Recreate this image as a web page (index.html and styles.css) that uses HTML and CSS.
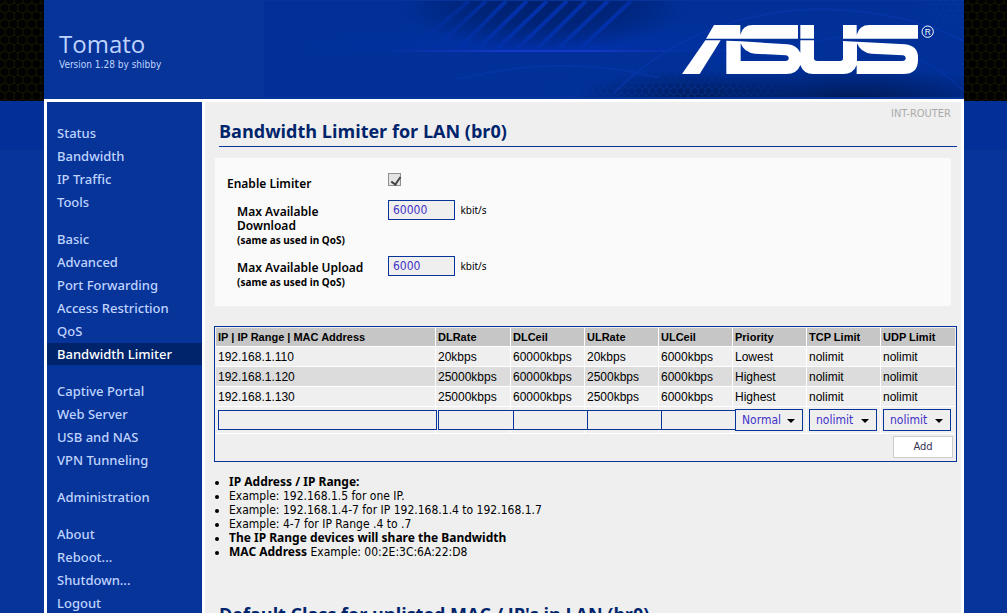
FILE: index.html
```html
<!DOCTYPE html>
<html lang="en">
<head>
  <meta charset="utf-8">
  <title>[INT-ROUTER] Bandwidth Limiter</title>
  <link rel="stylesheet" href="styles.css">
</head>
<body>
  <svg class="top-strip" aria-hidden="true">
    <defs>
      <pattern id="mesh" width="9" height="16" patternUnits="userSpaceOnUse">
        <path d="M5 0v3l4 2v6l-4 2v3M5 3L0 5v6l5 2" fill="none" stroke="#161604"/>
      </pattern>
    </defs>
    <rect width="100%" height="100%" fill="#020202"/>
    <rect width="100%" height="100%" fill="url(#mesh)"/>
  </svg>

  <div class="container">
    <header class="header">
      <svg class="banner" viewBox="0 0 700 96" aria-hidden="true">
        <defs>
          <pattern id="hex" width="7" height="12" patternUnits="userSpaceOnUse">
            <path d="M4 0v2l3 2v4l-3 2v2M4 2L0 4v4l4 2" fill="none" stroke="#063ba4" stroke-width=".7"/>
          </pattern>
          <radialGradient id="shade">
            <stop offset="0" stop-color="#001f6c"/>
            <stop offset=".5" stop-color="#001f6c" stop-opacity=".7"/>
            <stop offset="1" stop-color="#001f6c" stop-opacity="0"/>
          </radialGradient>
          <radialGradient id="dark">
            <stop offset="0" stop-color="#001a58"/>
            <stop offset="1" stop-color="#001a58" stop-opacity="0"/>
          </radialGradient>
          <radialGradient id="fade">
            <stop offset="0" stop-color="#fff"/>
            <stop offset="1" stop-color="#fff" stop-opacity="0"/>
          </radialGradient>
          <radialGradient id="light">
            <stop offset="0" stop-color="#0230a8"/>
            <stop offset="1" stop-color="#0230a8" stop-opacity="0"/>
          </radialGradient>
          <linearGradient id="line">
            <stop offset="0" stop-color="#1638c8" stop-opacity="0"/>
            <stop offset=".4" stop-color="#1638c8"/>
            <stop offset=".65" stop-color="#1638c8"/>
            <stop offset="1" stop-color="#1638c8" stop-opacity="0"/>
          </linearGradient>
          <linearGradient id="stripe" x1="0" y1="0" x2="700" y2="0" gradientUnits="userSpaceOnUse">
            <stop offset=".18" stop-color="#0230a8" stop-opacity="0"/>
            <stop offset=".35" stop-color="#0230a8"/>
            <stop offset=".5" stop-color="#0230a8"/>
            <stop offset=".62" stop-color="#0230a8" stop-opacity="0"/>
          </linearGradient>
          <mask id="hexmask">
            <ellipse cx="410" cy="100" rx="160" ry="40" fill="url(#fade)"/>
            <ellipse cx="690" cy="6" rx="50" ry="30" fill="url(#fade)"/>
          </mask>
        </defs>
        <rect width="700" height="96" fill="#003098"/>
        <ellipse cx="300" cy="48" rx="260" ry="24" fill="url(#light)"/>
        <ellipse cx="280" cy="0" rx="145" ry="50" fill="url(#shade)"/>
        <rect y="49" width="450" height="47" fill="#003098"/>
        <g stroke="url(#stripe)" stroke-width="4">
          <path d="M148 48L205 0M170 48L222 0M194 48L242 0M214 48L263 0M233 48L283 0M253 48L303 0M273 48L322 0M294 48L344 0M316 48L367 0"/>
        </g>
        <rect x="110" y="49" width="330" height="2" fill="url(#line)"/>
        <ellipse cx="430" cy="98" rx="120" ry="30" fill="url(#dark)"/>
        <ellipse cx="590" cy="98" rx="170" ry="32" fill="url(#dark)"/>
        <rect width="700" height="96" fill="url(#hex)" mask="url(#hexmask)"/>
        <g fill="none" stroke="#0a37ae" stroke-width="2">
          <path d="M194 78Q300 52 396 77" opacity=".5"/>
          <path d="M350 92Q430 10 560 8Q640 10 700 40" opacity=".6"/>
          <path d="M450 50Q520 50 600 30M630 50Q670 60 700 90" opacity=".4"/>
        </g>
      </svg>
      <svg class="logo" viewBox="66 75 762 147" role="img" aria-label="ASUS">
        <g fill="#fff">
          <path d="M162 75H241V104Q248 75 278 75H414V116H138Z"/>
          <path d="M421 75H462V116H421Z"/>
          <path d="M549 75H590V104Q598 75 628 75H774V116H549Z"/>
          <path d="M136 121H182L119 222H66Z"/>
          <path fill-rule="evenodd" d="M199 122L243 124L383 133Q410 135 421 158V121H462V175Q462 183 472 183H540Q549 183 549 175V123L590 125L735 133Q774 138 774 172V180Q774 222 730 222H590V195Q580 222 550 222H460Q430 222 421 195Q412 222 378 222H199ZM242 130V183H376Q386 183 386 175Q386 167 377 166L285 161Q252 158 242 130ZM591 130V183H727Q737 183 737 175Q737 167 728 166L634 161Q602 158 591 130Z"/>
        </g>
        <circle cx="803" cy="95" r="17" fill="none" stroke="#fff" stroke-width="3"/>
        <text class="reg" x="803" y="104" text-anchor="middle">R</text>
      </svg>
      <div class="title">Tomato</div>
      <div class="version">Version 1.28 by shibby</div>
    </header>

    <div class="main">
      <nav class="navi">
        <ul>
          <li><a href="#">Status</a></li>
          <li><a href="#">Bandwidth</a></li>
          <li><a href="#">IP Traffic</a></li>
          <li><a href="#">Tools</a></li>
        </ul>
        <ul>
          <li><a href="#">Basic</a></li>
          <li><a href="#">Advanced</a></li>
          <li><a href="#">Port Forwarding</a></li>
          <li><a href="#">Access Restriction</a></li>
          <li><a href="#">QoS</a></li>
          <li><a href="#" class="active">Bandwidth Limiter</a></li>
        </ul>
        <ul>
          <li><a href="#">Captive Portal</a></li>
          <li><a href="#">Web Server</a></li>
          <li><a href="#">USB and NAS</a></li>
          <li><a href="#">VPN Tunneling</a></li>
        </ul>
        <ul>
          <li><a href="#">Administration</a></li>
        </ul>
        <ul>
          <li><a href="#">About</a></li>
          <li><a href="#">Reboot...</a></li>
          <li><a href="#">Shutdown...</a></li>
          <li><a href="#">Logout</a></li>
        </ul>
      </nav>

      <div class="content">
        <div class="ident">INT-ROUTER</div>
        <h2>Bandwidth Limiter for LAN (br0)</h2>

        <div class="section">
          <div class="field">
            <label for="enable">Enable Limiter</label>
            <input type="checkbox" id="enable" checked>
          </div>
          <div class="field indent">
            <label for="dl">Max Available Download <small>(same as used in QoS)</small></label>
            <div><input type="text" id="dl" value="60000"> <span class="unit">kbit/s</span></div>
          </div>
          <div class="field indent">
            <label for="ul">Max Available Upload <small>(same as used in QoS)</small></label>
            <div><input type="text" id="ul" value="6000"> <span class="unit">kbit/s</span></div>
          </div>
        </div>

        <table class="grid">
          <thead>
            <tr><th class="ip">IP | IP Range | MAC Address</th><th class="dlrate">DLRate</th><th>DLCeil</th><th>ULRate</th><th>ULCeil</th><th>Priority</th><th>TCP Limit</th><th>UDP Limit</th></tr>
          </thead>
          <tbody>
            <tr><td>192.168.1.110</td><td>20kbps</td><td>60000kbps</td><td>20kbps</td><td>6000kbps</td><td>Lowest</td><td>nolimit</td><td>nolimit</td></tr>
            <tr class="even"><td>192.168.1.120</td><td>25000kbps</td><td>60000kbps</td><td>2500kbps</td><td>6000kbps</td><td>Highest</td><td>nolimit</td><td>nolimit</td></tr>
            <tr><td>192.168.1.130</td><td>25000kbps</td><td>60000kbps</td><td>2500kbps</td><td>6000kbps</td><td>Highest</td><td>nolimit</td><td>nolimit</td></tr>
            <tr class="editor">
              <td><input type="text" aria-label="IP, IP range or MAC address"></td>
              <td><input type="text" aria-label="DLRate"></td>
              <td><input type="text" aria-label="DLCeil"></td>
              <td><input type="text" aria-label="ULRate"></td>
              <td><input type="text" aria-label="ULCeil"></td>
              <td><select aria-label="Priority"><option>Normal</option><option>Lowest</option><option>Highest</option></select></td>
              <td><select aria-label="TCP Limit"><option>nolimit</option></select></td>
              <td><select aria-label="UDP Limit"><option>nolimit</option></select></td>
            </tr>
            <tr class="controls"><td colspan="8"><button type="button">Add</button></td></tr>
          </tbody>
        </table>

        <ul class="notes">
          <li><b>IP Address / IP Range:</b></li>
          <li>Example: 192.168.1.5 for one IP.</li>
          <li>Example: 192.168.1.4-7 for IP 192.168.1.4 to 192.168.1.7</li>
          <li>Example: 4-7 for IP Range .4 to .7</li>
          <li><b>The IP Range devices will share the Bandwidth</b></li>
          <li><b>MAC Address</b> Example: 00:2E:3C:6A:22:D8</li>
        </ul>

        <h2>Default Class for unlisted MAC / IP's in LAN (br0)</h2>
      </div>
    </div>
  </div>
</body>
</html>
```

FILE: styles.css
```css
* {
  box-sizing: border-box;
}
html {
  height: 100%;
  overflow: hidden;
}
body {
  height: 100%;
  margin: 0;
  padding-left: 1px;
  overflow: hidden;
  position: relative;
  background: #073499 linear-gradient(#003098, #003098) 0 0 / 100% 150px no-repeat;
  font-family: "DejaVu Sans Condensed", sans-serif;
  font-size: 12px;
  line-height: 14px;
  color: #000;
}
.top-strip {
  position: absolute;
  top: 0;
  left: 0;
  width: 100%;
  height: 101px;
}
.container {
  position: relative;
  max-width: 920px;
  min-height: 100%;
  margin: 0 auto;
  background: #fff;
}

/* header */
.header {
  position: relative;
  height: 99px;
  padding: 30px 15px 0;
  background: #073499;
  color: #bfd3ff;
}
.banner {
  position: absolute;
  top: 1px;
  right: 0;
  width: 700px;
  height: 96px;
}
.logo {
  position: absolute;
  top: 25px;
  right: 28px;
  width: 254px;
  height: 49px;
}
.reg {
  font: 25px "Liberation Sans", sans-serif;
  fill: #fff;
}
.title {
  position: relative;
  font-family: "Open Sans", sans-serif;
  font-size: 24px;
  line-height: 28px;
}
.version {
  position: relative;
  font-size: 10px;
}

/* menu */
.main {
  display: flex;
  gap: 3px;
  padding: 3px 3px 0;
}
.navi {
  flex: none;
  width: 155px;
  padding-top: 20px;
  background: #073499;
}
.navi ul {
  list-style: none;
  margin: 0;
  padding: 0 0 14px;
}
.navi a {
  display: block;
  height: 22px;
  margin-bottom: 1px;
  padding-left: 10px;
  font-family: "Noto Sans", sans-serif;
  font-size: 13px;
  font-weight: 500;
  line-height: 22px;
  color: #bfd3ff;
  text-decoration: none;
}
.navi a.active,
.navi a:hover {
  background: #00246b;
  color: #fff;
}

/* content */
.content {
  flex: 1;
  min-width: 0;
  padding: 5px 4px 0 9px;
  background: #efefef;
}
.ident {
  padding-right: 6px;
  text-align: right;
  font-size: 11px;
  color: #aaa;
}
h2 {
  margin: 0 0 0 5px;
  padding-bottom: 4px;
  border-bottom: 1px solid #073499;
  font-family: "Open Sans", sans-serif;
  font-size: 18px;
  font-weight: 700;
  line-height: 21px;
  color: #00246b;
}
.section {
  margin: 11px 6px 0 1px;
  padding: 14px 12px 8px;
  background: #fafafa;
}
.field {
  display: grid;
  grid-template-columns: 161px 1fr;
  min-height: 28px;
}
.field label {
  padding: 5px 20px 0 0;
  font-family: "Noto Sans", sans-serif;
  font-weight: 600;
}
.field.indent label {
  padding: 5px 20px 10px 10px;
}
.field small {
  display: block;
  padding-top: 1px;
  font-size: 10px;
  font-weight: 700;
  line-height: 12px;
}
.unit {
  padding-left: 2px;
  font-family: "Noto Sans", sans-serif;
  font-size: 10px;
}
input[type="checkbox"] {
  appearance: none;
  width: 13px;
  height: 13px;
  margin: 1px 0;
  border: 1px solid #8e8f8f;
  background: #e4e4e4;
  position: relative;
}
input[type="checkbox"]:checked::after {
  content: "";
  position: absolute;
  top: 1px;
  left: 4px;
  width: 4px;
  height: 8px;
  border: solid #444;
  border-width: 0 2px 2px 0;
  transform: rotate(35deg);
}
input[type="text"],
select {
  border: 1px solid #073499;
  border-radius: 0;
  background: #efefef;
  color: #4133c8;
  font-family: "DejaVu Sans Condensed", sans-serif;
  font-size: 12px;
}
input[type="text"] {
  width: 67px;
  height: 20px;
  padding: 0 4px;
}

/* rules table */
.grid {
  width: 100%;
  margin-top: 20px;
  padding: 1px 1px 0;
  border: 1px solid #073499;
  border-spacing: 0;
  table-layout: fixed;
  font-family: "Liberation Sans", sans-serif;
}
.grid th,
.grid td {
  width: 74px;
  height: 20px;
  padding: 0 2px;
  border-right: 1px solid #fff;
  border-bottom: 1px solid #fff;
  text-align: left;
  white-space: nowrap;
}
.grid th {
  height: 19px;
  background: #c6c6c6;
  font-size: 11px;
}
.grid th.ip {
  width: auto;
}
.grid th.dlrate {
  width: 75px;
}
.grid tr > :last-child {
  border-right: 0;
}
.grid .even td {
  background: #dcdcdc;
}
.grid .editor td {
  height: 27px;
}
.grid .editor input {
  display: block;
  width: calc(100% + 6px);
}
.grid .editor td:first-child input {
  width: calc(100% + 4px);
}
.grid select {
  display: block;
  appearance: none;
  width: 68px;
  height: 22px;
  padding: 0 6px;
}
.grid .editor td:nth-child(n+6) {
  position: relative;
}
.grid .editor td:nth-child(n+6)::after {
  content: "";
  position: absolute;
  top: 12px;
  left: 54px;
  border: 4px solid transparent;
  border-top-color: #000;
  border-bottom: 0;
  pointer-events: none;
}
.grid .controls td {
  height: 27px;
  padding-bottom: 2px;
  border-bottom: 0;
  text-align: right;
}
.grid button {
  display: block;
  width: 60px;
  height: 22px;
  margin-left: auto;
  padding: 0;
  border: 1px solid #ccc;
  background: #fff;
  color: #335;
  font-family: "DejaVu Sans Condensed", sans-serif;
  font-size: 11px;
}

/* help */
.notes {
  margin: 13px 0 45px;
  padding-left: 15px;
}
.notes b {
  font-family: "Noto Sans", sans-serif;
}
```
